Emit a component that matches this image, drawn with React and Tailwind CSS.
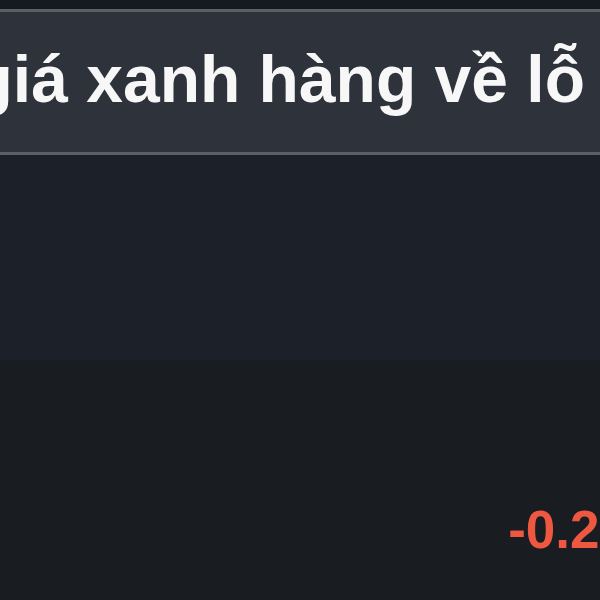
export default function App() {
  return (
    <div className="w-[600px] h-[600px] flex flex-col bg-[#191d21] overflow-hidden" style={{ fontFamily: '"Liberation Sans", Arial, sans-serif' }}>
      <div className="h-[9px] bg-[#151920]" />
      <div className="h-[146px] flex items-center justify-end overflow-hidden bg-[#2e323b] border-t-[3px] border-b-[3px] border-[#5a5e66] pr-[15px]">
        <span className="whitespace-nowrap text-[66px] font-bold text-[#f7f7f8] leading-none pb-[6px]">Mở bán giá xanh hàng về lỗ</span>
      </div>
      <div className="h-[205px] bg-[#1c2028]" />
      <div className="flex-1 flex justify-end overflow-hidden">
        <span className="mt-[143px] -mr-[29px] whitespace-nowrap text-[53px] font-bold text-[#ee5841] leading-none">-0.25</span>
      </div>
    </div>
  );
}
